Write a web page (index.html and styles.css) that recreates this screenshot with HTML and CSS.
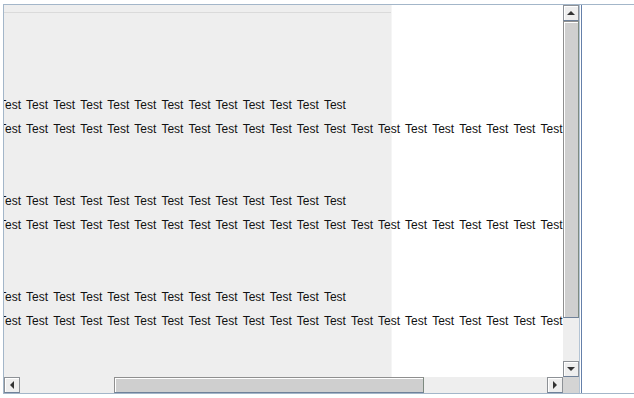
FILE: index.html
```html
<!DOCTYPE html>
<html lang="en">
<head>
<meta charset="UTF-8">
<title>Scroll Test</title>
<link rel="stylesheet" href="styles.css">
</head>
<body>

<div class="frame">
    <div class="pane">
        <div class="viewport">
            <div class="panel">
                <div class="rule"></div>
            </div>
            <div class="lines">
                <div class="group">
                    <div class="line">Test Test Test Test Test Test Test Test Test Test Test Test Test</div>
                    <div class="line">Test Test Test Test Test Test Test Test Test Test Test Test Test Test Test Test Test Test Test Test Test Test Test Test Test Test Test Test Test Test</div>
                </div>
                <div class="group">
                    <div class="line">Test Test Test Test Test Test Test Test Test Test Test Test Test</div>
                    <div class="line">Test Test Test Test Test Test Test Test Test Test Test Test Test Test Test Test Test Test Test Test Test Test Test Test Test Test Test Test Test Test</div>
                </div>
                <div class="group">
                    <div class="line">Test Test Test Test Test Test Test Test Test Test Test Test Test</div>
                    <div class="line">Test Test Test Test Test Test Test Test Test Test Test Test Test Test Test Test Test Test Test Test Test Test Test Test Test Test Test Test Test Test</div>
                </div>
            </div>
        </div>

        <div class="vbar">
            <div class="btn"><span class="arrow up"></span></div>
            <div class="thumb vthumb"></div>
            <div class="track"></div>
            <div class="btn"><span class="arrow down"></span></div>
        </div>

        <div class="hbar">
            <div class="btn"><span class="arrow left"></span></div>
            <div class="track lead"></div>
            <div class="thumb hthumb"></div>
            <div class="track"></div>
            <div class="btn"><span class="arrow right"></span></div>
        </div>

        <div class="corner"></div>
    </div>
    <div class="edge-light"></div>
    <div class="edge-gap"></div>
    <div class="edge-dark"></div>
    <div class="outside"></div>
</div>

</body>
</html>
```

FILE: styles.css
```css
body {
    margin: 4px 0 0 3px;
    background: #fff;
    font-family: "Liberation Sans", Arial, sans-serif;
    font-size: 12px;
    color: #111;
}
.frame {
    display: flex;
    height: 388px;
    border-top: 1px solid #a3b6c9;
    border-left: 1px solid #a3b6c9;
    border-bottom: 1px solid #a3b6c9;
}
.pane {
    display: grid;
    grid-template-columns: 559px 16px;
    grid-template-rows: 372px 16px;
}
.edge-light {
    width: 1px;
    background: #b4c4d4;
}
.edge-gap {
    width: 1px;
    background: #fff;
}
.edge-dark {
    width: 1px;
    background: #6580aa;
}
.outside {
    flex: 1;
    background: #fff;
}

/* viewport */
.viewport {
    position: relative;
    overflow: hidden;
    background: #fff;
}
.panel {
    position: absolute;
    top: 0;
    left: 0;
    width: 387px;
    height: 100%;
    background: #eeeeee;
    border-right: 1px solid #f5f5f5;
}
.rule {
    height: 7px;
    border-bottom: 1px solid #dadada;
}
.lines {
    position: relative;
    margin-left: -5px;
    padding-top: 88px;
    display: flex;
    flex-direction: column;
    gap: 48px;
}
.line {
    height: 24px;
    line-height: 24px;
    white-space: nowrap;
    word-spacing: 1.95px;
}

/* scrollbars */
.vbar {
    display: flex;
    flex-direction: column;
    background: #eeeeee;
}
.hbar {
    display: flex;
    background: #eeeeee;
}
.track {
    flex: 1;
}
.track.lead {
    flex: none;
    width: 94px;
}
.btn {
    width: 16px;
    height: 16px;
    box-sizing: border-box;
    flex: none;
    display: flex;
    align-items: center;
    justify-content: center;
    background: #eeeeee;
    border: 1px solid #8d9196;
    border-bottom-color: #6f8199;
    box-shadow: inset 1px 1px #fff;
}
.thumb {
    box-sizing: border-box;
    flex: none;
    background: #cfcfcf;
    border: 1px solid #8f8f8f;
    border-bottom-color: #6f8199;
    border-right-color: #7d8a80;
    box-shadow: inset 1px 1px #fff;
}
.vthumb {
    height: 297px;
}
.hthumb {
    width: 310px;
}
.corner {
    background: #d4d4d4;
}
.arrow {
    width: 0;
    height: 0;
}
.arrow.up {
    border-left: 4px solid transparent;
    border-right: 4px solid transparent;
    border-bottom: 4px solid #333;
}
.arrow.down {
    border-left: 4px solid transparent;
    border-right: 4px solid transparent;
    border-top: 4px solid #333;
}
.arrow.left {
    border-top: 4px solid transparent;
    border-bottom: 4px solid transparent;
    border-right: 4px solid #333;
}
.arrow.right {
    border-top: 4px solid transparent;
    border-bottom: 4px solid transparent;
    border-left: 4px solid #333;
}
```
